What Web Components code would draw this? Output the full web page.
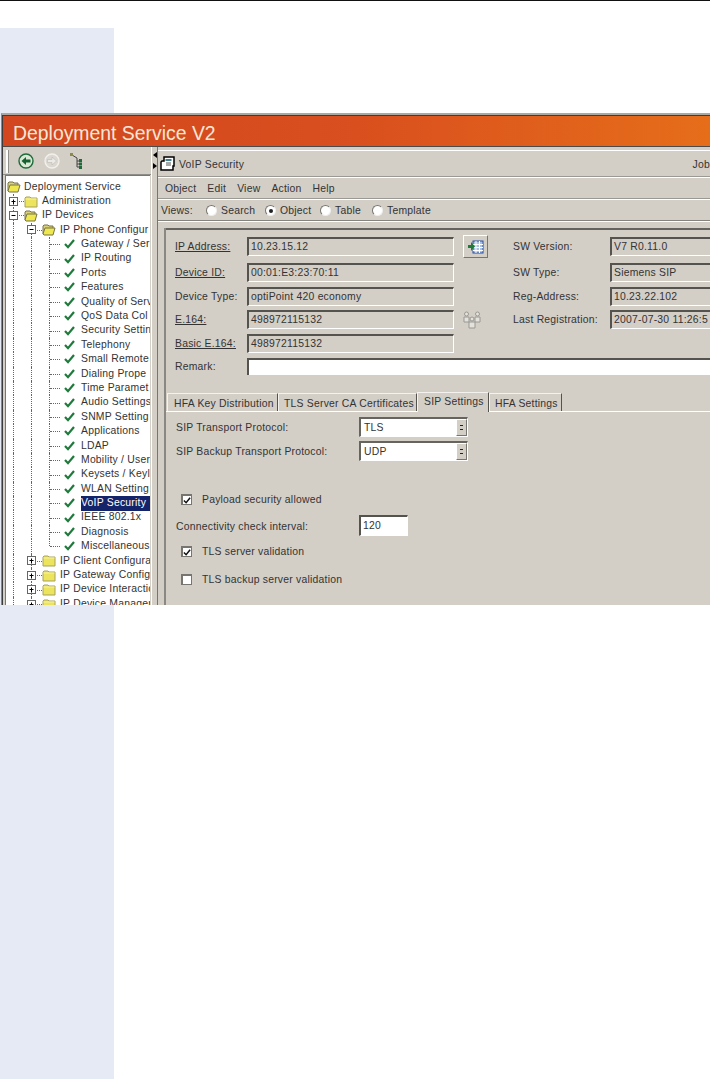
<!DOCTYPE html>
<html>
<head>
<meta charset="utf-8">
<title>Deployment Service V2</title>
<style>
  html, body { margin: 0; padding: 0; background: #fff; }
  body { font-family: "Liberation Sans", Arial, sans-serif; }
</style>
</head>
<body>
<manual-page>
  <app-window heading="Deployment Service V2">
    <nav-pane slot="nav">
      <tree-row kind="open" label="Deployment Service"></tree-row>
      <tree-row cells="+" kind="closed" label="Administration"></tree-row>
      <tree-row cells="-" kind="open" label="IP Devices"></tree-row>
      <tree-row cells="|-" kind="open" label="IP Phone Configur"></tree-row>
      <tree-row cells="||T" kind="leaf" label="Gateway / Ser"></tree-row>
      <tree-row cells="||T" kind="leaf" label="IP Routing"></tree-row>
      <tree-row cells="||T" kind="leaf" label="Ports"></tree-row>
      <tree-row cells="||T" kind="leaf" label="Features"></tree-row>
      <tree-row cells="||T" kind="leaf" label="Quality of Serv"></tree-row>
      <tree-row cells="||T" kind="leaf" label="QoS Data Col"></tree-row>
      <tree-row cells="||T" kind="leaf" label="Security Settin"></tree-row>
      <tree-row cells="||T" kind="leaf" label="Telephony"></tree-row>
      <tree-row cells="||T" kind="leaf" label="Small Remote"></tree-row>
      <tree-row cells="||T" kind="leaf" label="Dialing Prope"></tree-row>
      <tree-row cells="||T" kind="leaf" label="Time Paramet"></tree-row>
      <tree-row cells="||T" kind="leaf" label="Audio Settings"></tree-row>
      <tree-row cells="||T" kind="leaf" label="SNMP Setting"></tree-row>
      <tree-row cells="||T" kind="leaf" label="Applications"></tree-row>
      <tree-row cells="||T" kind="leaf" label="LDAP"></tree-row>
      <tree-row cells="||T" kind="leaf" label="Mobility / User"></tree-row>
      <tree-row cells="||T" kind="leaf" label="Keysets / Keyl"></tree-row>
      <tree-row cells="||T" kind="leaf" label="WLAN Setting"></tree-row>
      <tree-row cells="||T" kind="leaf" label="VoIP Security" selected></tree-row>
      <tree-row cells="||T" kind="leaf" label="IEEE 802.1x"></tree-row>
      <tree-row cells="||T" kind="leaf" label="Diagnosis"></tree-row>
      <tree-row cells="||L" kind="leaf" label="Miscellaneous"></tree-row>
      <tree-row cells="|+" kind="closed" label="IP Client Configura"></tree-row>
      <tree-row cells="|+" kind="closed" label="IP Gateway Config"></tree-row>
      <tree-row cells="|+" kind="closed" label="IP Device Interactio"></tree-row>
      <tree-row cells="|+" kind="closed" label="IP Device Manager"></tree-row>
    </nav-pane>
    <detail-pane slot="detail"></detail-pane>
  </app-window>
</manual-page>

<script>
const FONT = `"Liberation Sans", Arial, sans-serif`;
const FACE = "#d3cec6";

const FOLDER_OPEN = `<svg width="14" height="13" viewBox="0 0 14 13"><path d="M1 11V3l1-1h4l1 1h4v2" fill="#d8d07a" stroke="#77734a"/><path d="M1 11l2-6h10l-2 7H2z" fill="#eee84e" stroke="#77734a"/></svg>`;
const FOLDER_CLOSED = `<svg width="14" height="13" viewBox="0 0 14 13"><path d="M1 3l1-1h4l1 1h6v9H1z" fill="#ece45c" stroke="#a8a25c"/><path d="M1.500 4h11" stroke="#f6f2a8"/></svg>`;
const CHECK = `<svg width="11" height="10" viewBox="0 0 11 10"><path d="M1 5l3 3.200L10 1" fill="none" stroke="#1f7a3c" stroke-width="2.200"/></svg>`;

class ManualPage extends HTMLElement {
  connectedCallback() {
    this.attachShadow({ mode: "open" }).innerHTML = `
      <style>
        :host { display: block; position: relative; width: 710px; height: 1079px; overflow: hidden; font-family: ${FONT}; }
        .rule { height: 1px; background: #111; }
        .margin { width: 114px; height: 1051px; margin-top: 27px; background: #e6eaf5; }
        /* the screenshot sits on top of the margin band */
        ::slotted(app-window) { position: absolute; left: 1px; top: 113px; }
      </style>
      <div class="rule"></div>
      <div class="margin"></div>
      <slot></slot>`;
  }
}

class AppWindow extends HTMLElement {
  connectedCallback() {
    this.attachShadow({ mode: "open" }).innerHTML = `
      <style>
        :host { display: flex; flex-direction: column; width: 709px; height: 492px; overflow: hidden; background: ${FACE};
          border-top: 2px solid #a9a7a2; box-sizing: border-box; border-left: 1px solid #8a8883; }
        .inner { flex: 1; min-height: 0; display: flex; flex-direction: column; border-top: 1px solid #3c3c3c; border-left: 1px solid #3c3c3c; }
        .title { flex: none; height: 31px; box-sizing: border-box; padding: 5px 0 0 10px; color: #f7e6d6; font-size: 19.4px; line-height: 24px;
          background: linear-gradient(90deg, #d2471f 0%, #d94f1e 50%, #e66e1a 100%); border-bottom: 1px solid #4a4a4a; }
        .body { flex: 1; min-height: 0; display: flex; }
        ::slotted(nav-pane) { flex: none; }
        .split { flex: none; width: 6px; display: flex; flex-direction: column; align-items: center; gap: 5px; padding-top: 5px; box-sizing: border-box;
          border-left: 1px solid #fff; }
        .split i { width: 0; height: 0; border-top: 3px solid transparent; border-bottom: 3px solid transparent; }
        .split .l { border-right: 4px solid #000; }
        .split .r { border-left: 4px solid #000; }
        ::slotted(detail-pane) { flex: 1; min-width: 0; }
      </style>
      <div class="inner">
        <div class="title">${this.getAttribute("heading")}</div>
        <div class="body">
          <slot name="nav"></slot>
          <div class="split"><i class="l"></i><i class="r"></i></div>
          <slot name="detail"></slot>
        </div>
      </div>`;
  }
}

class NavPane extends HTMLElement {
  connectedCallback() {
    this.attachShadow({ mode: "open" }).innerHTML = `
      <style>
        :host { display: flex; flex-direction: column; width: 148px; height: 100%; }
        .bar { flex: none; height: 28px; box-sizing: border-box; display: flex; align-items: center; padding: 1px 0 0 3px; border-bottom: 1px solid #8f8d88; }
        .grip { width: 2px; height: 23px; background: #fff; border-right: 1px solid #8f8d88; margin-right: 9px; }
        .bar svg { display: block; }
        .bar .gap { width: 10px; }
        .tree { flex: 1; min-height: 0; overflow: hidden; background: #fff; margin: 0 1px 0 2px; padding-top: 3.500px;
          border-left: 1px solid #777; border-top: 1px solid #777; }
      </style>
      <div class="bar">
        <div class="grip"></div>
        <svg width="16" height="16" viewBox="0 0 16 16"><circle cx="8" cy="8" r="7" fill="#d9e8d4" stroke="#1e6b3a" stroke-width="1.400"/><path d="M3.500 8L8 4v2.500h4.500v3H8V12z" fill="#14602f"/></svg>
        <div class="gap"></div>
        <svg width="16" height="16" viewBox="0 0 16 16"><circle cx="8" cy="8" r="7" fill="#dbd8d2" stroke="#f2f0ec" stroke-width="1.400"/><path d="M12.500 8L8 4v2.500H3.500v3H8V12z" fill="#eceae6" stroke="#b5b2ab" stroke-width=".5"/></svg>
        <div class="gap"></div>
        <svg width="14" height="16" viewBox="0 0 14 16"><path d="M2 2l5 3v9h3M7 8h3M7 11h3" fill="none" stroke="#444"/><rect x="0" y="0" width="3" height="3" fill="#8a8a50"/><rect x="9" y="6" width="3" height="3" fill="#1e6b3a"/><rect x="9" y="9.500" width="3" height="3" fill="#1e6b3a"/><rect x="9" y="13" width="3" height="3" fill="#1e6b3a"/></svg>
      </div>
      <div class="tree"><slot></slot></div>`;
  }
}

class TreeRow extends HTMLElement {
  connectedCallback() {
    const cellSpec = this.getAttribute("cells") || "";
    const cells = [...cellSpec].map((c) => {
      if (c === "|") return `<span class="c v"></span>`;
      if (c === "T") return `<span class="c v h"></span>`;
      if (c === "L") return `<span class="c half h"></span>`;
      const bar = c === "+" ? `<path d="M4.500 2.500v5"/>` : "";
      return `<span class="c v h"><svg class="box" width="9" height="9" viewBox="0 0 9 9"><rect x=".5" y=".5" width="8" height="8" fill="#fff" stroke="#666"/><g stroke="#000"><path d="M2.500 4.500h4"/>${bar}</g></svg></span>`;
    }).join("");
    const kind = this.getAttribute("kind");
    const icon = kind === "leaf" ? CHECK : kind === "open" ? FOLDER_OPEN : FOLDER_CLOSED;
    const sel = this.hasAttribute("selected") ? " sel" : "";
    this.attachShadow({ mode: "open" }).innerHTML = `
      <style>
        :host { display: flex; align-items: center; height: 14.4px; white-space: nowrap; font-size: 10.4px; letter-spacing: .22px; color: #333; }
        .c { flex: none; position: relative; display: block; width: 18px; height: 100%; }
        .v::before, .half::before { content: ""; position: absolute; left: 7px; top: 0; bottom: 0; border-left: 1px dotted #666; }
        .half::before { bottom: 50%; }
        .h::after { content: ""; position: absolute; left: 8px; width: 10px; top: 50%; border-top: 1px dotted #666; }
        .box { position: absolute; left: 3px; top: 2.700px; z-index: 1; }
        .icon { flex: none; display: flex; }
        .root { margin-left: 1px; margin-right: -1px; }
        .leaf { margin-left: 4px; width: 11px; }
        .t { margin-left: 3px; padding: 0 3px 0 1px; line-height: 14.4px; }
        .leaf + .t { margin-left: 6px; padding-left: 0; }
        .sel { background: #14246b; color: #fff; flex: 1; }
      </style>
      ${cells}<span class="icon ${kind === "leaf" ? "leaf" : cellSpec ? "" : "root"}">${icon}</span><span class="t${sel}">${this.getAttribute("label")}</span>`;
  }
}

class RadioItem extends HTMLElement {
  connectedCallback() {
    this.attachShadow({ mode: "open" }).innerHTML = `
      <style>
        :host { display: inline-flex; align-items: center; gap: 4px; }
        .r { width: 11px; height: 11px; box-sizing: border-box; border-radius: 50%; background: #fff; border: 1px solid; border-color: #77756f #eee #eee #77756f;
          display: flex; align-items: center; justify-content: center; }
        .r i { width: 4px; height: 4px; border-radius: 50%; background: #222; }
      </style>
      <span class="r">${this.hasAttribute("checked") ? "<i></i>" : ""}</span><slot></slot>`;
  }
}

class FormField extends HTMLElement {
  connectedCallback() {
    const white = this.hasAttribute("white");
    this.attachShadow({ mode: "open" }).innerHTML = `
      <style>
        :host { display: block; box-sizing: border-box; height: 19px; min-width: 0; overflow: hidden; white-space: nowrap; padding-left: 2px;
          border: 1px solid; border-width: 2px 1px 1px 2px; border-color: #55534e #fff #fff #55534e;
          background: ${white ? "#fff" : FACE}; line-height: 16px; }
      </style><slot></slot>`;
  }
}

class ComboBox extends HTMLElement {
  connectedCallback() {
    this.attachShadow({ mode: "open" }).innerHTML = `
      <style>
        :host { display: flex; box-sizing: border-box; width: 109px; height: 20px; background: #fff; line-height: 17px; padding-left: 3px;
          border: 1px solid; border-width: 2px 1px 1px 2px; border-color: #66645f #fff #fff #66645f; }
        span { flex: 1; }
        .btn { flex: none; width: 11px; background: ${FACE}; border: 1px solid; border-color: #fff #77756f #77756f #fff; box-sizing: border-box; display: flex; flex-direction: column; align-items: center; justify-content: center; gap: 3px; }
        .btn i { width: 3px; height: 1px; background: #222; }
      </style>
      <span><slot></slot></span><div class="btn"><i></i><i></i></div>`;
  }
}

class CheckItem extends HTMLElement {
  connectedCallback() {
    const tick = this.hasAttribute("checked") ? `<svg width="9" height="9" viewBox="0 0 9 9"><path d="M1 4.500l2.500 2.500L8 1.500" fill="none" stroke="#111" stroke-width="1.700"/></svg>` : "";
    this.attachShadow({ mode: "open" }).innerHTML = `
      <style>
        :host { display: flex; align-items: center; gap: 10px; padding-left: 5px; }
        .b { flex: none; width: 11px; height: 11px; box-sizing: border-box; background: #fff; border: 1px solid #77756f; border-width: 2px 1px 1px 2px; display: flex; align-items: center; justify-content: center; }
      </style>
      <span class="b">${tick}</span><slot></slot>`;
  }
}

class DetailPane extends HTMLElement {
  connectedCallback() {
    const row = (a, b, c, d, mid = "") => `
      <div class="lab ${a.u ? "u" : ""}">${a.t}</div><form-field>${b}</form-field><div class="mid">${mid}</div>
      <div class="lab">${c}</div><form-field>${d}</form-field>`;
    this.attachShadow({ mode: "open" }).innerHTML = `
      <style>
        :host { display: block; height: 100%; overflow: hidden; font-size: 10.4px; letter-spacing: .22px; color: #333; border-left: 1px solid #77756f; box-sizing: border-box; padding-top: 3px; }
        .strip { display: flex; align-items: center; box-sizing: border-box; padding-top: 1px; }
        .head { height: 27px; padding-left: 2px; gap: 3px; border-top: 1px solid #fff; border-bottom: 1px solid #9b9994; }
        .head .job { margin-left: auto; }
        .menu { height: 22px; padding-left: 7px; gap: 11px; border-top: 1px solid #fff; border-bottom: 1px solid #9b9994; }
        .views { height: 22px; padding-left: 3px; border-top: 1px solid #fff; border-bottom: 1px solid #85837e; }
        .views .name { width: 45px; }
        .views radio-item { margin-right: 3px; }
        .band { height: 6px; box-sizing: border-box; border-top: 1px solid #fff; }
        .body { margin: 1px 0 0 6px; border-left: 2px solid #8a8883; height: 400px; }
        .info { height: 129px; box-sizing: border-box; padding: 7px 0 0 9px; border-top: 2px solid #65635e; display: grid;
          grid-template-columns: 72px 207px 59px 97px 110px; grid-template-rows: 21.500px repeat(4, 19px); row-gap: 4.500px; align-items: start; }
        .lab { line-height: 19px; }
        .lab.u { text-decoration: underline; }
        .mid { display: flex; padding-left: 9px; height: 19px; align-items: center; }
        .go { width: 25px; height: 23px; flex: none; box-sizing: border-box; border: 1px solid; border-color: #fff #77756f #77756f #fff; display: flex; align-items: center; justify-content: center; }
        .remark { display: grid; grid-template-columns: 72px 1fr; padding-left: 9px; height: 17px; align-items: center; }
        .remark form-field { height: 17px; border-width: 2px 0 0 2px; }
        .light { height: 1px; margin-left: 81px; background: #f4f2ee; }
        .tabs { display: flex; align-items: flex-end; height: 36px; margin-left: 1px; }
        .tab { height: 18px; box-sizing: border-box; padding: 0 0 0 5px; line-height: 20px; border-top: 1px solid #f4f2ee; border-left: 1px solid #f4f2ee; border-right: 1px solid #55534e; white-space: nowrap; }
        .tab.on { height: 20px; padding-left: 6px; line-height: 18px; margin-bottom: -1px; position: relative; z-index: 1; background: ${FACE}; }
        .tabline { border-top: 1px solid #fff; height: 0; }
        .panel { padding-left: 10px; }
        .line { display: flex; align-items: center; }
        .line > div { width: 183px; padding-top: 1px; }
        .num { width: 49px; height: 21px; line-height: 18px; }
      </style>
      <div class="strip head">
        <svg width="16" height="16" viewBox="0 0 16 16"><path d="M2 5h2V1h10v9l-1 0v4H1V6z" fill="#fff" stroke="#000" stroke-width="1.500"/><rect x="5.500" y="3" width="6" height="2" fill="#3f7f8f"/><path d="M6 7h5M6 9h5" stroke="#555"/></svg>
        <span>VoIP Security</span><span class="job">Job</span>
      </div>
      <div class="strip menu"><span>Object</span><span>Edit</span><span>View</span><span>Action</span><span>Help</span></div>
      <div class="strip views"><span class="name">Views:</span>
        <radio-item style="width:56px">Search</radio-item>
        <radio-item style="width:52px" checked>Object</radio-item>
        <radio-item style="width:49px">Table</radio-item>
        <radio-item>Template</radio-item>
      </div>
      <div class="band"></div>
      <div class="body">
        <div class="info">
          ${row({ t: "IP Address:", u: 1 }, "10.23.15.12", "SW Version:", "V7 R0.11.0",
            `<div class="go"><svg width="16" height="14" viewBox="0 0 16 14"><rect x="5" y="1" width="10" height="12" fill="#a9c3e8" stroke="#2a4fa0"/><path d="M8 1v12M11.500 1v12M5 4.500h10M5 7.500h10M5 10.500h10" stroke="#fff"/><path d="M0 5h3V2l4 4.500L3 11V8H0z" fill="#1f7a3c"/></svg></div>`)}
          ${row({ t: "Device ID:", u: 1 }, "00:01:E3:23:70:11", "SW Type:", "Siemens SIP")}
          ${row({ t: "Device Type:" }, "optiPoint 420 economy", "Reg-Address:", "10.23.22.102")}
          ${row({ t: "E.164:", u: 1 }, "498972115132", "Last Registration:", "2007-07-30 11:26:5",
            `<svg width="18" height="18" viewBox="0 0 18 18" fill="#e4e2dc" stroke="#9a9892"><circle cx="3.500" cy="3" r="2"/><path d="M1 11V6h5v5z"/><circle cx="14.500" cy="3" r="2"/><path d="M12 11V6h5v5z"/><circle cx="9" cy="8" r="2"/><path d="M6 17v-6h6v6z"/></svg>`)}
          <div class="lab u">Basic E.164:</div><form-field>498972115132</form-field>
        </div>
        <div class="remark"><div class="lab">Remark:</div><form-field white></form-field></div>
        <div class="light"></div>
        <div class="tabs">
          <div class="tab" style="width:111px;padding-left:6px">HFA Key Distribution</div>
          <div class="tab" style="width:139px">TLS Server CA Certificates</div>
          <div class="tab on" style="width:72px">SIP Settings</div>
          <div class="tab" style="width:73px">HFA Settings</div>
        </div>
        <div class="tabline"></div>
        <div class="panel">
          <div class="line" style="margin-top:5px"><div>SIP Transport Protocol:</div><combo-box>TLS</combo-box></div>
          <div class="line" style="margin-top:4px"><div>SIP Backup Transport Protocol:</div><combo-box>UDP</combo-box></div>
          <check-item checked style="margin-top:33px">Payload security allowed</check-item>
          <div class="line" style="margin-top:10px"><div>Connectivity check interval:</div><form-field white class="num">120</form-field></div>
          <check-item checked style="margin-top:10px">TLS server validation</check-item>
          <check-item style="margin-top:17px">TLS backup server validation</check-item>
        </div>
      </div>`;
  }
}

customElements.define("manual-page", ManualPage);
customElements.define("app-window", AppWindow);
customElements.define("nav-pane", NavPane);
customElements.define("tree-row", TreeRow);
customElements.define("radio-item", RadioItem);
customElements.define("form-field", FormField);
customElements.define("combo-box", ComboBox);
customElements.define("check-item", CheckItem);
customElements.define("detail-pane", DetailPane);
</script>
</body>
</html>
